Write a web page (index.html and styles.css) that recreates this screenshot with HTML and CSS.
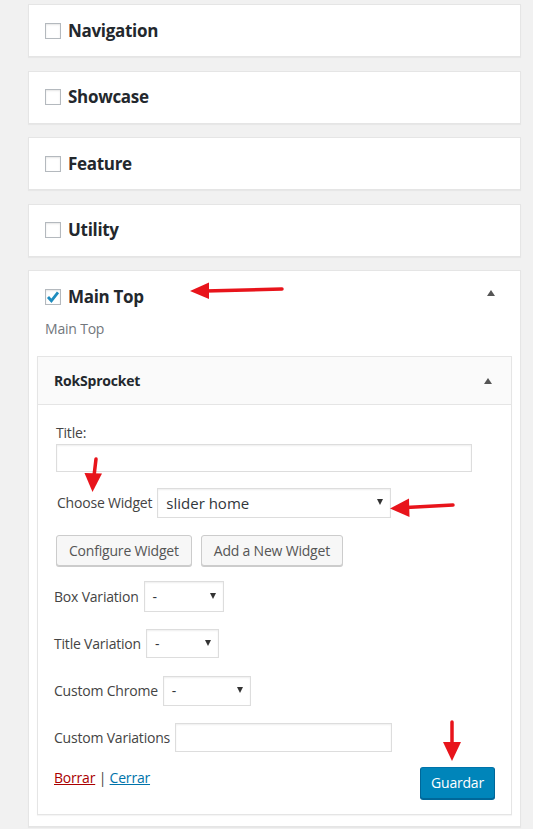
FILE: index.html
```html
<!DOCTYPE html>
<html>
<head>
<meta charset="utf-8">
<link rel="stylesheet" href="styles.css">
</head>
<body>
<div class="page">
  <div class="panel">
    <div class="panel-head"><span class="cb"></span><span class="panel-title">Navigation</span></div>
  </div>
  <div class="panel">
    <div class="panel-head"><span class="cb"></span><span class="panel-title">Showcase</span></div>
  </div>
  <div class="panel">
    <div class="panel-head"><span class="cb"></span><span class="panel-title">Feature</span></div>
  </div>
  <div class="panel">
    <div class="panel-head"><span class="cb"></span><span class="panel-title">Utility</span></div>
  </div>
  <div class="panel panel-open">
    <div class="panel-head">
      <span class="cb cb-checked"><svg viewBox="0 0 16 16" width="16" height="16"><path d="M3 8 L6.4 11.8 L13 3.4" fill="none" stroke="#1e8cbe" stroke-width="2.8" stroke-linejoin="miter"/></svg></span>
      <span class="panel-title">Main Top</span>
      <span class="toggle toggle-panel"></span>
    </div>
    <p class="panel-desc">Main Top</p>
    <div class="widget">
      <div class="widget-head">
        <span class="widget-title">RokSprocket</span>
        <span class="toggle"></span>
      </div>
      <div class="widget-body">
        <div class="field-label">Title:</div>
        <div class="input input-title"></div>
        <div class="row row-choose">
          <span class="lbl">Choose Widget</span>
          <div class="select sel-widget"><span class="sel-text">slider home</span><i class="caret"></i></div>
        </div>
        <div class="btn-row">
          <span class="btn">Configure Widget</span>
          <span class="btn">Add a New Widget</span>
        </div>
        <div class="row row-var row-box">
          <span class="lbl">Box Variation</span>
          <div class="select sel-box"><span class="sel-text">-</span><i class="caret"></i></div>
        </div>
        <div class="row row-var row-title">
          <span class="lbl">Title Variation</span>
          <div class="select sel-title"><span class="sel-text">-</span><i class="caret"></i></div>
        </div>
        <div class="row row-var row-chrome">
          <span class="lbl">Custom Chrome</span>
          <div class="select sel-chrome"><span class="sel-text">-</span><i class="caret"></i></div>
        </div>
        <div class="row row-var row-cv">
          <span class="lbl">Custom Variations</span>
          <div class="input input-cv"></div>
        </div>
        <div class="actions">
          <div class="links"><a class="link-del">Borrar</a> | <a class="link-close">Cerrar</a></div>
          <span class="btn-primary">Guardar</span>
        </div>
      </div>
    </div>
  </div>
</div>
<svg class="annot" width="533" height="829" viewBox="0 0 533 829">
  <g fill="#e8141b" stroke="#e8141b" stroke-linecap="round">
    <line x1="282" y1="289" x2="205" y2="291" stroke-width="3.5"/>
    <polygon points="190,291 209,282.5 209,299" stroke="none"/>
    <line x1="96" y1="459" x2="94" y2="476" stroke-width="3.5"/>
    <polygon points="92.5,492 84.5,473 102,473.5" stroke="none"/>
    <line x1="453" y1="505" x2="406" y2="507.5" stroke-width="3.5"/>
    <polygon points="390,508.5 409,498.5 409.5,517" stroke="none"/>
    <line x1="452" y1="722" x2="452" y2="745" stroke-width="3.5"/>
    <polygon points="452,761 443,742 461,742" stroke="none"/>
  </g>
</svg>
</body>
</html>
```

FILE: styles.css
```css
* { box-sizing: border-box; }

html, body {
  margin: 0;
  padding: 0;
  background: #f1f1f1;
}

body {
  position: relative;
  width: 533px;
  height: 829px;
  overflow: hidden;
  font-family: "Open Sans", "DejaVu Sans", sans-serif;
  font-size: 14px;
  line-height: 20px;
  color: #444;
}

.page {
  padding: 4px 0 0 28px;
  width: 521px;
}

.panel {
  background: #fff;
  border: 1px solid #e5e5e5;
  box-shadow: 0 1px 1px rgba(0, 0, 0, 0.04);
  margin-bottom: 13.5px;
}

.panel-head {
  height: 51px;
  display: flex;
  align-items: center;
  padding: 0 25px 0 16px;
}

.cb {
  width: 16px;
  height: 16px;
  flex: none;
  border: 1px solid #b4b9be;
  background: #fff;
  box-shadow: inset 0 1px 2px rgba(0, 0, 0, 0.1);
  position: relative;
}

.cb svg {
  position: absolute;
  left: -1px;
  top: -1px;
}

.panel-title {
  margin-left: 7px;
  font-size: 17px;
  font-weight: 700;
  color: #23282d;
  letter-spacing: -0.3px;
}

.toggle {
  margin-left: auto;
  width: 0;
  height: 0;
  border-left: 4px solid transparent;
  border-right: 4px solid transparent;
  border-bottom: 6px solid #555;
}

.toggle-panel {
  margin-top: -8px;
}

.panel-open {
  padding: 0 8px 11px;
}

.panel-open .panel-head {
  margin: 0 -8px;
}

.panel-desc {
  margin: -3px 0 17px 8px;
  font-size: 14px;
  line-height: 20px;
  color: #72777c;
  letter-spacing: -0.2px;
}

.widget {
  border: 1px solid #e5e5e5;
  box-shadow: 0 1px 1px rgba(0, 0, 0, 0.04);
  background: #fff;
}

.widget-head {
  height: 48px;
  display: flex;
  align-items: center;
  padding: 0 19px 0 16px;
  background: #fafafa;
  border-bottom: 1px solid #e5e5e5;
}

.widget-title {
  font-weight: 700;
  font-size: 14px;
  color: #23282d;
  letter-spacing: -0.2px;
}

.widget-body {
  padding: 18px 16px 15px 18px;
  letter-spacing: -0.2px;
}

.field-label {
  color: #444;
  height: 20px;
}

.input {
  background: #fff;
  border: 1px solid #ddd;
  box-shadow: inset 0 1px 2px rgba(0, 0, 0, 0.07);
}

.input-title {
  margin-top: 1px;
  width: 416px;
  height: 28px;
}

.row {
  display: flex;
  align-items: center;
  gap: 5px;
}

.row-choose {
  margin-top: 16px;
  margin-left: 1px;
}

.row-var {
  margin-left: -2px;
}

.row-box { margin-top: 15px; }
.row-title { margin-top: 17px; }
.row-chrome { margin-top: 18px; }
.row-cv { margin-top: 17px; }

.lbl {
  color: #444;
  white-space: nowrap;
}

.select {
  position: relative;
  height: 30px;
  background: #fff;
  border: 1px solid #ddd;
  box-shadow: inset 0 1px 2px rgba(0, 0, 0, 0.07);
  display: flex;
  align-items: center;
  padding-left: 8px;
  color: #32373c;
}

.sel-widget {
  width: 234px;
  font-size: 15px;
  letter-spacing: 0;
}

.sel-box { width: 80px; height: 31px; }
.sel-title { width: 73px; height: 29px; }
.sel-chrome { width: 88px; }

.caret {
  position: absolute;
  right: 7px;
  top: 50%;
  margin-top: -4px;
  width: 0;
  height: 0;
  border-left: 3px solid transparent;
  border-right: 3px solid transparent;
  border-top: 6px solid #333;
}

.btn-row {
  display: flex;
  gap: 9px;
  margin-top: 17px;
}

.btn {
  height: 31px;
  display: inline-flex;
  align-items: center;
  padding: 0 12px;
  background: #f7f7f7;
  border: 1px solid #ccc;
  border-radius: 3px;
  box-shadow: 0 1px 0 #ccc;
  color: #555;
  white-space: nowrap;
}

.input-cv {
  width: 217px;
  height: 29px;
}

.actions {
  display: flex;
  justify-content: space-between;
  align-items: flex-start;
  margin-top: 15px;
  margin-left: -2px;
}

.links {
  color: #444;
  margin-top: 1px;
}

.link-del {
  color: #a00;
  text-decoration: underline;
}

.link-close {
  color: #0073aa;
  text-decoration: underline;
}

.btn-primary {
  height: 32px;
  width: 75px;
  display: inline-flex;
  align-items: center;
  justify-content: center;
  background: #0085ba;
  border: 1px solid #0073aa;
  border-color: #0073aa #006799 #006799;
  border-radius: 3px;
  box-shadow: 0 1px 0 #006799;
  color: #fff;
}

.annot {
  position: absolute;
  left: 0;
  top: 0;
  pointer-events: none;
}
```
